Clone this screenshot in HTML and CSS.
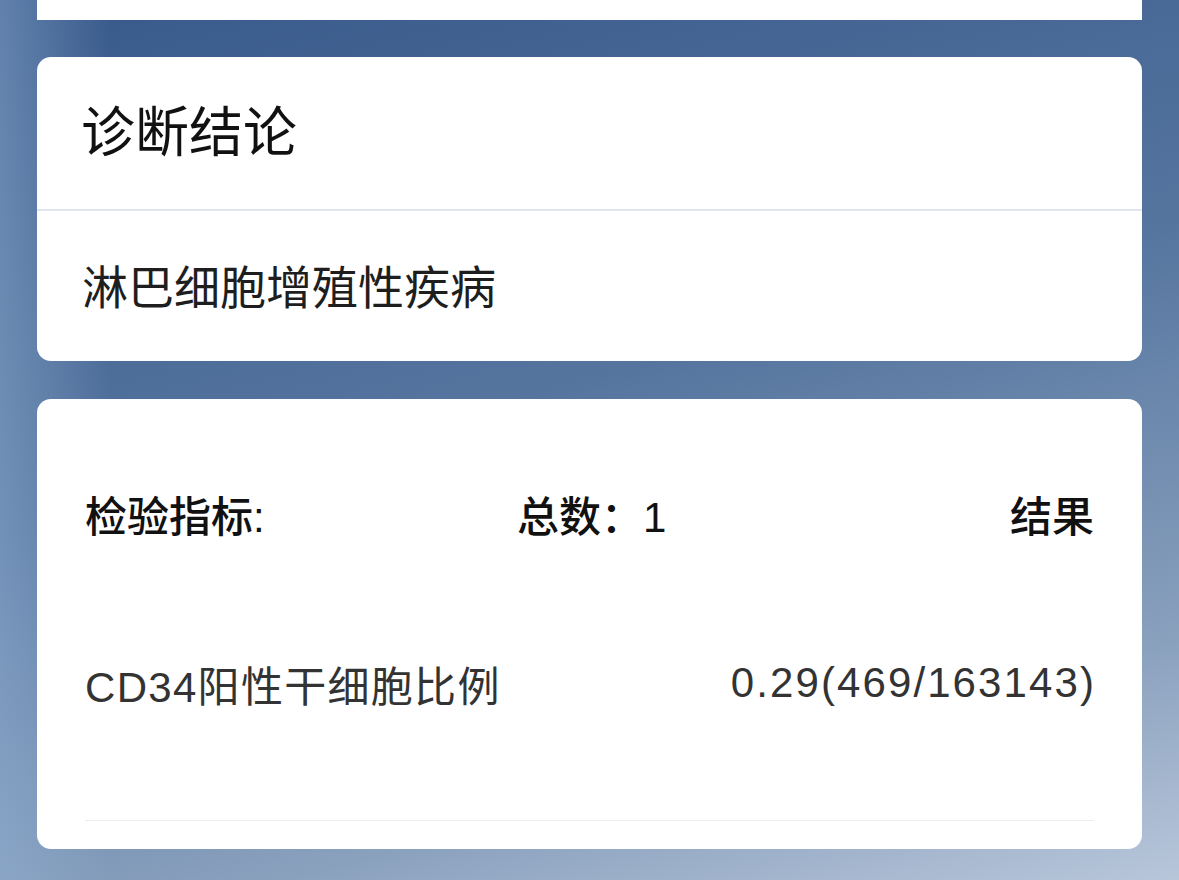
FILE: index.html
```html
<!DOCTYPE html>
<html lang="zh-CN">
<head>
    <meta charset="UTF-8" />
    <title>诊断报告</title>
    <link rel="stylesheet" href="styles.css">
</head>
<body>
    <div class="page">
        <div class="card card-top"></div>

        <div class="card card-result">
            <div class="card-head">诊断结论</div>
            <div class="card-body">淋巴细胞增殖性疾病</div>
        </div>

        <div class="card stats">
            <div class="stats-head">
                <span>检验指标:</span>
                <span>总数：1</span>
                <span class="right">结果</span>
            </div>
            <div class="stats-row">
                <span class="name">CD34阳性干细胞比例</span>
                <span class="value">0.29(469/163143)</span>
            </div>
        </div>
    </div>
</body>
</html>
```

FILE: styles.css
```css
html, body {
    margin: 0;
    height: 100%;
}
body {
    font-family: "Liberation Sans", "Noto Sans CJK SC", sans-serif;
    background:
        linear-gradient(to right, rgba(150, 180, 215, 0.45) 0, rgba(150, 180, 215, 0) 110px),
        linear-gradient(165deg, #37598a 0%, #55759f 45%, #8aa1be 80%, #b8c6da 100%);
    overflow: hidden;
}
.page {
    padding: 0 37px;
}
.card {
    background: #fff;
    border-radius: 14px;
    margin-bottom: 37px;
}
.card-top {
    height: 20px;
    border-radius: 0;
}
.card-result {
    margin-bottom: 38px;
}
.card-head {
    height: 142px;
    display: flex;
    align-items: center;
    padding: 0 44px 10px;
    font-size: 54px;
    color: #111;
    border-bottom: 2px solid #dfe6ef;
}
.card-body {
    height: 146px;
    display: flex;
    align-items: center;
    padding: 0 45px 4px;
    font-size: 46px;
    color: #1e1e1e;
}
.stats {
    padding: 84px 48px 0;
    height: 366px;
    margin-bottom: 0;
}
.stats-head {
    display: grid;
    grid-template-columns: 432px 1fr auto;
    align-items: center;
    height: 60px;
    font-size: 42px;
    font-weight: 500;
    color: #111;
}
.stats-head .right {
    text-align: right;
}
.stats-row {
    display: flex;
    justify-content: space-between;
    align-items: center;
    height: 60px;
    margin-top: 110px;
    padding-bottom: 107px;
    border-bottom: 1px solid #ededed;
    font-size: 42px;
    color: #333;
}
.stats-row .name {
    letter-spacing: 1.3px;
}
.stats-row .value {
    letter-spacing: 2.1px;
    margin-right: -2px;
}
```
